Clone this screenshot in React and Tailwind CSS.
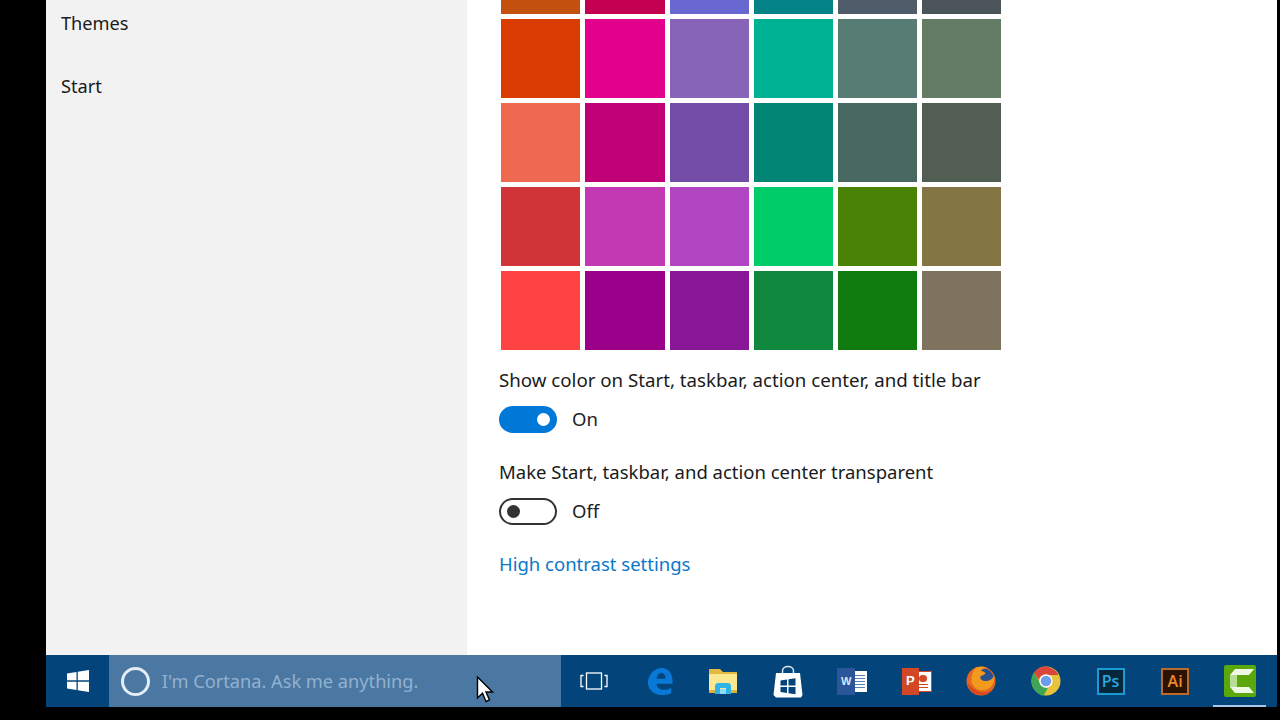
import { Fragment } from 'react'

const rows = [
  ['#c4500f', '#c2004f', '#6868d0', '#038387', '#515c6b', '#4a5459'],
  ['#da3b01', '#e3008c', '#8764b8', '#00b294', '#567c73', '#647c64'],
  ['#ef6950', '#bf0077', '#744da9', '#018574', '#486860', '#525e54'],
  ['#d13438', '#c239b3', '#b146c2', '#00cc6a', '#498205', '#847545'],
  ['#ff4343', '#9a0089', '#881798', '#10893e', '#107c10', '#7e735f'],
]

function WinLogo() {
  return (
    <svg width="24" height="24" viewBox="0 0 24 24" fill="#fff">
      <path d="M1 4.500 10.500 3v8.300H1zM11.800 2.800 23 1v10.300H11.800zM1 12.700h9.500V21L1 19.500zM11.800 12.700H23V23l-11.200-1.800z" />
    </svg>
  )
}

function TaskView() {
  return (
    <svg width="28" height="18" viewBox="0 0 28 18" fill="none" stroke="#fff" strokeWidth="1.300">
      <rect x="6.500" y="1" width="15" height="16" />
      <path d="M3.500 3.500H1v11h2.500M24.500 3.500H27v11h-2.500" />
    </svg>
  )
}

function Edge() {
  return (
    <svg className="ml-[3px]" width="28" height="28" viewBox="0 0 28 30">
      <path
        fill="#0a78d7"
        fillRule="evenodd"
        d="M1 16C2 7 8.500 1 16 1c7 0 11.500 6 11.500 14.500V18H10.500c0 4.500 3.500 6.500 8 6.500 2.500 0 5-.6 7.500-2v5.700c-2.800 1.300-6 1.800-9 1.800C7.500 30 1 24.500 1 16zM10.500 12.500H20C20 8.500 18.200 6.500 15.500 6.500S10.800 9 10.500 12.500z"
      />
    </svg>
  )
}

function Folder() {
  return (
    <svg width="30" height="28" viewBox="0 0 30 28">
      <path fill="#e2b93f" d="M1 2h11l3 3h14v21H1z" />
      <path fill="#fbe78f" d="M1 7h28v19H1z" />
      <path fill="#dcb33c" d="M1 23h28v3H1z" />
      <path fill="#2eb4ea" d="M7 27v-9l2-2h12l2 2v9h-5v-6h-6v6z" />
      <path fill="#8fdcf5" d="M12 22h6v5h-6z" />
    </svg>
  )
}

function Store() {
  return (
    <svg width="30" height="33" viewBox="0 0 30 33">
      <path fill="none" stroke="#dfe6ee" strokeWidth="1.500" d="M9.500 9V6c0-6 11-6 11 0v3" />
      <path fill="#fff" d="M3 8h24l2.500 22-1.500 2.500H3L.5 30z" />
      <path fill="#03457b" d="M7.500 15.500l6.500-1v6H7.500zM15.500 14.300l7-1v7.200h-7zM7.500 22H14v6l-6.500-1zM15.500 22h7v7.200l-7-1z" />
    </svg>
  )
}

function Word() {
  return (
    <div className="relative w-[30px] h-[27px]">
      <div className="absolute right-0 top-[3px] w-[15px] h-[21px] bg-white flex flex-col justify-center gap-[2px] px-[2px]">
        <div className="h-[1px] bg-[#5a7fb5]" />
        <div className="h-[1px] bg-[#5a7fb5]" />
        <div className="h-[1px] bg-[#5a7fb5]" />
        <div className="h-[1px] bg-[#5a7fb5]" />
        <div className="h-[1px] bg-[#5a7fb5]" />
      </div>
      <div className="absolute left-0 top-0 w-[18px] h-[27px] bg-[#2b579a] flex items-center justify-center text-[#dbe6f5] text-[11px] font-bold font-['Liberation_Sans',sans-serif]">W</div>
    </div>
  )
}

function PowerPoint() {
  return (
    <div className="relative w-[30px] h-[27px]">
      <div className="absolute right-0 top-[3px] w-[17px] h-[21px] bg-white border border-[#d24726] flex flex-col items-center justify-center gap-[2px]">
        <div className="w-[8px] h-[7px] rounded-full bg-[#d24726]" />
        <div className="w-[10px] h-[1px] bg-[#d24726]" />
        <div className="w-[10px] h-[1px] bg-[#d24726]" />
      </div>
      <div className="absolute left-0 top-0 w-[17px] h-[27px] bg-[#d24726] flex items-center justify-center text-white text-[13px] font-bold font-['Liberation_Sans',sans-serif]">P</div>
    </div>
  )
}

function Firefox() {
  return (
    <svg width="30" height="30" viewBox="0 0 30 30">
      <circle cx="15" cy="15" r="14.500" fill="#e4661f" />
      <circle cx="17.500" cy="12.500" r="10" fill="#27508f" />
      <path fill="#f29a1e" d="M10 1.500c3-1 8-1.200 11 .5-3 0-5 1-6 3 2 0 4 1 4.500 2.500-1.500 1.500-4 2-5 3-1 2 1 4 4 4.500 4 .5 7.500-1.500 10-5 .5 6-3 11-7 13.500-6 2-12 .5-15-5C4 14 6 6 10 1.500z" />
      <path fill="#d8451f" d="M1.500 17c1 7 7 12 13.500 12 5 0 9-2.200 12-6-5 4-11 4.500-16 2C7 23 4 20 1.500 17z" />
    </svg>
  )
}

function Chrome() {
  return (
    <svg width="30" height="30" viewBox="0 0 30 30">
      <circle cx="15" cy="15" r="14.500" fill="#e8c33a" />
      <path fill="#d9463a" d="M3 6.500C8-1.500 22-1.500 27.500 9H15c-4 0-6.500 2-7.500 4.500z" />
      <path fill="#3da556" d="M3 6.500 9.500 18c2 3 4.500 4 7.500 3.700l-4.500 8C4 28.500-3.500 16 3 6.500z" />
      <circle cx="15" cy="15" r="6.700" fill="#fff" />
      <circle cx="15" cy="15" r="5.300" fill="#6c9cea" />
    </svg>
  )
}

function AdobeIcon({ label, border, text, bg }) {
  return (
    <div className={`w-[28px] h-[27px] border-2 flex items-center justify-center text-[16px] leading-none font-semibold font-['Open_Sans',sans-serif] ${border} ${text} ${bg}`}>
      {label}
    </div>
  )
}

function Camtasia() {
  return (
    <svg width="32" height="32" viewBox="0 0 32 32">
      <rect width="32" height="32" rx="2" fill="#5aa80c" />
      <path fill="#eef8e2" d="M6 10 11 4h19l-5 6H13v12h12l5 6H11l-5-6z" />
      <path fill="#b9dd97" d="M6 10h7v12H6z" />
    </svg>
  )
}

const Cursor = () => (
  <svg className="absolute left-[476px] top-[676px]" width="18" height="28" viewBox="0 0 18 28">
    <path d="M1.500 1v21l5-4.700 3.500 8.200 3.500-1.500-3.500-8h6.500z" fill="#fff" stroke="#000" strokeWidth="1.400" />
  </svg>
)

export default function App() {
  const icons = [
    <TaskView />, <Edge />, <Folder />, <Store />, <Word />, <PowerPoint />, <Firefox />, <Chrome />,
    <AdobeIcon label="Ps" border="border-[#1c9ad6]" text="text-[#2aa9e0]" bg="bg-[#06263b]" />,
    <AdobeIcon label="Ai" border="border-[#bb6a2a]" text="text-[#f08a24]" bg="bg-[#2a1304]" />,
    <Camtasia />,
  ]

  return (
    <div className="relative w-[1280px] h-[720px] overflow-hidden bg-black font-['Noto_Sans',sans-serif]">
      <div className="ml-[46px] mr-[3px] h-[707px] flex flex-col">
        <div className="flex-1 flex min-h-0">
          {/* sidebar */}
          <div className="w-[421px] bg-[#f2f2f2] pl-[15px] pt-[12px] text-[18.2px] text-[#1a1a1a]">
            <div className="h-[23px] leading-[23px]">Themes</div>
            <div className="h-[23px] leading-[23px] mt-[40px]">Start</div>
          </div>

          {/* colors */}
          <div className="flex-1 bg-white pl-[32px]">
            <div className="ml-[2.300px] w-[500px] grid grid-cols-6 grid-rows-[14px_repeat(4,79px)] gap-x-[5.200px] gap-y-[5px]">
              {rows.map((row, i) => (
                <Fragment key={i}>
                  {row.map(c => <div key={c} style={{ background: c }} />)}
                </Fragment>
              ))}
            </div>

            <div className="mt-[17px] h-[26px] leading-[26px] text-[18.700px] text-[#1a1a1a]">Show color on Start, taskbar, action center, and title bar</div>
            <div className="mt-[12px] h-[28px] flex items-center text-[18.500px] text-[#222]">
              <div className="w-[58px] h-[27px] rounded-full bg-[#0078d7] flex items-center justify-end pr-[7px]">
                <div className="w-[13px] h-[13px] rounded-full bg-white" />
              </div>
              <span className="ml-[15px]">On</span>
            </div>

            <div className="mt-[26px] h-[26px] leading-[26px] text-[18.500px] text-[#1a1a1a]">Make Start, taskbar, and action center transparent</div>
            <div className="mt-[12px] h-[28px] flex items-center text-[18.500px] text-[#222]">
              <div className="w-[58px] h-[27px] rounded-full border-2 border-[#333] flex items-center pl-[6px]">
                <div className="w-[13px] h-[13px] rounded-full bg-[#333]" />
              </div>
              <span className="ml-[15px]">Off</span>
            </div>

            <div className="mt-[26px] text-[18.500px] leading-[26px] text-[#0a78c8]">High contrast settings</div>
          </div>
        </div>

        {/* taskbar */}
        <div className="h-[52px] flex shrink-0 bg-[#03457b]">
          <div className="w-[63px] flex items-center justify-center pl-[1px] bg-[#03457b]">
            <WinLogo />
          </div>
          <div className="w-[454px] flex items-center bg-[#4b78a3] pl-[12px]">
            <div className="w-[29px] h-[29px] rounded-full border-[3px] border-[#e4edf5]" />
            <span className="ml-[12px] pt-[1px] text-[18.200px] text-[#93b1cf]">I'm Cortana. Ask me anything.</span>
          </div>
          <div className="flex-1 flex justify-end pr-[5px]">
            {icons.map((icon, i) => (
              <div key={i} className="relative w-[64.600px] flex items-center justify-center">
                {icon}
                {i === icons.length - 1 && <div className="absolute left-[6px] right-[6px] bottom-0 h-[2px] bg-[#a9c6e4]" />}
              </div>
            ))}
          </div>
        </div>
      </div>
      <Cursor />
    </div>
  )
}
